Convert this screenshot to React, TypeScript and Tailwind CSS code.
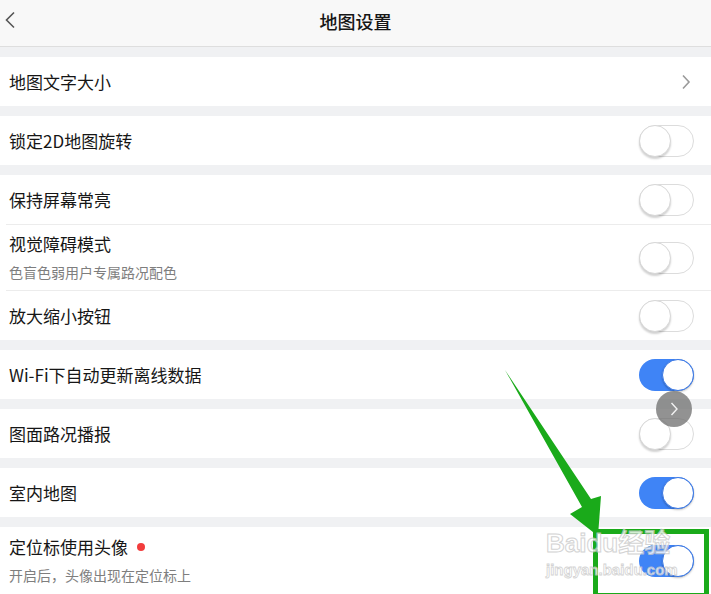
import React from "react";

function Toggle({ on }: { on?: boolean }) {
  if (on) {
    return (
      <div className="relative h-[32px] w-[55px] rounded-full bg-[#3f84f6]">
        <div className="absolute right-0 top-0 h-[32px] w-[32px] rounded-full border border-[#3a78e6] bg-white shadow-[0_1px_2px_rgba(0,0,0,0.25)]" />
      </div>
    );
  }
  return (
    <div className="relative h-[32px] w-[55px] rounded-full border border-[#dcdcdc] bg-white">
      <div className="absolute left-[-1px] top-[-1px] h-[32px] w-[32px] rounded-full border border-[#d8d8d8] bg-white shadow-[0_2px_2px_rgba(0,0,0,0.18)]" />
    </div>
  );
}

function Row({ title, sub, on, chevron, dot, h = "h-[49px]" }: { title: string; sub?: string; on?: boolean; chevron?: boolean; dot?: boolean; h?: string }) {
  return (
    <div className={`flex items-center justify-between bg-white pl-[9px] pr-[17px] ${h}`}>
      <div className={`flex flex-col ${sub ? "mb-[2px]" : ""}`}>
        <div className="flex items-center text-[17px] leading-[22px] text-[#161616]">
          <span>{title}</span>
          {dot && <span className="ml-[9px] h-[8px] w-[8px] rounded-full bg-[#f23c3c]" />}
        </div>
        {sub && <div className="mt-[8px] text-[14px] leading-[18px] text-[#7e7e7e]">{sub}</div>}
      </div>
      {chevron ? (
        <svg width="10" height="16" viewBox="0 0 10 16" className="mr-[3px]">
          <path d="M2 1.5 L8 8 L2 14.5" fill="none" stroke="#9a9a9a" strokeWidth="1.6" />
        </svg>
      ) : (
        <Toggle on={on} />
      )}
    </div>
  );
}

function Sep() {
  return (
    <div className="bg-white pl-[6px]">
      <div className="h-px bg-[#ececec]" />
    </div>
  );
}

function Gap() {
  return <div className="h-[10px] bg-[#f0f1f3]" />;
}

export default function App() {
  return (
    <div
      className="relative h-[594px] w-[711px] overflow-hidden bg-[#f0f1f3]"
      style={{ fontFamily: '"Noto Sans CJK SC", "Noto Sans", sans-serif' }}
    >
      <div className="relative flex h-[47px] items-center justify-center border-b border-[#dedede] bg-[#f8f8f8] pb-[4px]">
        <svg width="12" height="18" viewBox="0 0 12 18" className="absolute left-[4px] top-[11px]">
          <path d="M10 1.5 L2.5 9 L10 16.5" fill="none" stroke="#555" strokeWidth="1.6" />
        </svg>
        <span className="text-[18px] font-medium text-[#161616]">地图设置</span>
      </div>
      <Gap />
      <Row title="地图文字大小" chevron />
      <Gap />
      <Row title="锁定2D地图旋转" />
      <Gap />
      <Row title="保持屏幕常亮" />
      <Sep />
      <Row title="视觉障碍模式" sub="色盲色弱用户专属路况配色" h="h-[65px]" />
      <Sep />
      <Row title="放大缩小按钮" />
      <Gap />
      <Row title="Wi-Fi下自动更新离线数据" on />
      <Gap />
      <Row title="图面路况播报" />
      <Gap />
      <Row title="室内地图" on />
      <Gap />
      <Row title="定位标使用头像" sub="开启后，头像出现在定位标上" dot on h="h-[67px]" />

      {/* floating gray circle button */}
      <div className="absolute left-[656px] top-[391px] flex h-[36px] w-[36px] items-center justify-center rounded-full bg-[rgba(110,110,110,0.75)]">
        <svg width="10" height="16" viewBox="0 0 10 16">
          <path d="M2.5 2 L8 8 L2.5 14" fill="none" stroke="#f2f2f2" strokeWidth="1.4" />
        </svg>
      </div>

      {/* annotation arrow */}
      <svg className="pointer-events-none absolute left-0 top-0" width="711" height="594">
        <polygon points="505,370 591,499 601,496 598,536 570,514 582,507" fill="#1aaa1a" />
        <rect x="595.5" y="531.5" width="111" height="64" fill="none" stroke="#1aaa1a" strokeWidth="5" />
      </svg>

      {/* watermark */}
      <div className="pointer-events-none absolute left-[546px] top-[528px] flex flex-col items-start opacity-80">
        <div
          className="text-[26px] font-bold leading-[30px] text-white"
          style={{ WebkitTextStroke: "1px #c9c9c9", fontFamily: '"Liberation Sans", "Noto Sans CJK SC", sans-serif' }}
        >
          Baidu经验
        </div>
        <div
          className="mt-[4px] text-[15px] font-bold leading-[16px] text-white"
          style={{ WebkitTextStroke: "0.8px #c9c9c9", fontFamily: '"Liberation Sans", sans-serif' }}
        >
          jingyan.baidu.com
        </div>
      </div>
    </div>
  );
}
